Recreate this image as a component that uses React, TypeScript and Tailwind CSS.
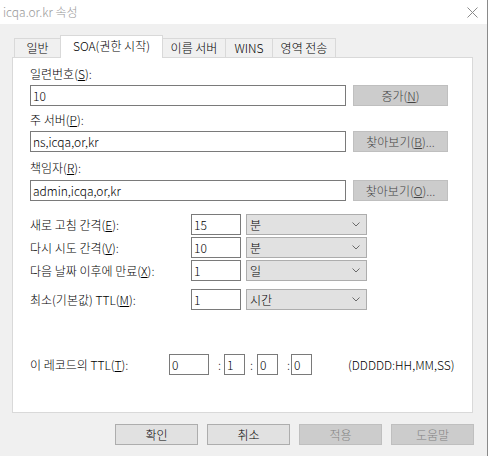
import { ReactNode } from "react";

const font = "font-['Noto_Sans_CJK_KR','Noto_Sans',sans-serif]";

function TextBox({ value, className }: { value: string; className: string }) {
  return (
    <div
      className={`h-[21px] border border-[#7a7a7a] bg-white pl-[2px] leading-[19px] text-black ${className}`}
    >
      {value}
    </div>
  );
}

function GrayButton({ children, dim }: { children: ReactNode; dim?: boolean }) {
  return (
    <div
      className={`flex h-[21px] w-[95px] items-center justify-center border border-[#bfbfbf] bg-[#cccccc] ${
        dim ? "text-[#838383]" : "text-[#444]"
      }`}
    >
      {children}
    </div>
  );
}

function Select({ value }: { value: string }) {
  return (
    <div className="flex h-[21px] w-[121px] items-center justify-between border border-[#adadad] bg-[#e1e1e1] pl-[3px] pr-[5px]">
      <span>{value}</span>
      <svg width="8" height="5" viewBox="0 0 8 5" className="mr-[1px]">
        <path d="M0.5 0.5 L4 4 L7.5 0.5" fill="none" stroke="#6a6a6a" strokeWidth="1" />
      </svg>
    </div>
  );
}

function IntervalRow({
  label,
  num,
  unit,
  className,
}: {
  label: ReactNode;
  num: string;
  unit: string;
  className?: string;
}) {
  return (
    <div className={`flex items-center ${className ?? ""}`}>
      <div className="w-[161px]">{label}</div>
      <TextBox value={num} className="w-[50px]" />
      <div className="ml-[5px]">
        <Select value={unit} />
      </div>
    </div>
  );
}

function Tab({ children, w, first }: { children: ReactNode; w: string; first?: boolean }) {
  return (
    <div
      className={`flex h-[19px] items-center justify-center border-t border-r border-[#d9d9d9] bg-[#f0f0f0] ${
        first ? "border-l" : ""
      } ${w}`}
    >
      {children}
    </div>
  );
}

function DialogButton({ children, disabled }: { children: ReactNode; disabled?: boolean }) {
  return (
    <div
      className={`flex h-[21px] w-[83px] items-center justify-center border ${
        disabled
          ? "border-[#bfbfbf] bg-[#cccccc] text-[#838383]"
          : "border-[#adadad] bg-[#e1e1e1] text-black"
      }`}
    >
      {children}
    </div>
  );
}

export default function App() {
  return (
    <div className={`flex h-[456px] w-[490px] bg-white text-[12px] font-light text-black ${font}`}>
      <div className="flex w-[488px] flex-col border-r border-[#8a8a8a]">
        {/* title bar */}
        <div className="flex h-[24px] items-center justify-between bg-white pl-[3px] pr-[9px]">
          <span className="text-[#999999]">icqa.or.kr 속성</span>
          <svg width="11" height="11" viewBox="0 0 11 11">
            <path d="M0.5 0.5 L10.5 10.5 M10.5 0.5 L0.5 10.5" stroke="#8a8a8a" strokeWidth="1" />
          </svg>
        </div>

        <div className="flex flex-1 flex-col bg-[#f0f0f0] pl-[12px] pt-[12px]">
          {/* tabs */}
          <div className="flex h-[21px] items-end pl-[2px]">
            <Tab w="w-[47px]" first>
              일반
            </Tab>
            <div className="relative z-10 -mb-px -ml-px flex h-[23px] w-[103px] items-start justify-center border border-b-0 border-[#d9d9d9] bg-white pt-[1px]">
              SOA(권한 시작)
            </div>
            <Tab w="w-[63px]">이름 서버</Tab>
            <Tab w="w-[47px]">WINS</Tab>
            <Tab w="w-[63px]">영역 전송</Tab>
          </div>

          {/* panel */}
          <div className="flex h-[356px] w-[461px] flex-col border border-[#d9d9d9] bg-white pl-[17px]">
            <div className="mt-[7px] leading-[18px]">
              일련번호(<u>S</u>):
            </div>
            <div className="mt-[2px] flex items-center gap-[7px]">
              <TextBox value="10" className="w-[316px]" />
              <GrayButton>
                증가(<u>N</u>)
              </GrayButton>
            </div>

            <div className="mt-[5px] leading-[18px]">
              주 서버(<u>P</u>):
            </div>
            <div className="mt-[2px] flex items-center gap-[7px]">
              <TextBox value="ns,icqa,or,kr" className="w-[316px]" />
              <GrayButton>
                찾아보기(<u>B</u>)...
              </GrayButton>
            </div>

            <div className="mt-[7px] leading-[18px]">
              책임자(<u>R</u>):
            </div>
            <div className="mt-[3px] flex items-center gap-[7px]">
              <TextBox value="admin,icqa,or,kr" className="w-[316px]" />
              <GrayButton>
                찾아보기(<u>O</u>)...
              </GrayButton>
            </div>

            <IntervalRow
              className="mt-[13px]"
              label={
                <>
                  새로 고침 간격(<u>E</u>):
                </>
              }
              num="15"
              unit="분"
            />
            <IntervalRow
              className="mt-[2px]"
              label={
                <>
                  다시 시도 간격(<u>V</u>):
                </>
              }
              num="10"
              unit="분"
            />
            <IntervalRow
              className="mt-[2px]"
              label={
                <>
                  다음 날짜 이후에 만료(<u>X</u>):
                </>
              }
              num="1"
              unit="일"
            />
            <IntervalRow
              className="mt-[8px]"
              label={
                <>
                  최소(기본값) TTL(<u>M</u>):
                </>
              }
              num="1"
              unit="시간"
            />

            <div className="mt-[44px] flex items-center">
              <div className="w-[139px]">
                이 레코드의 TTL(<u>T</u>):
              </div>
              <TextBox value="0" className="w-[40px]" />
              <span className="w-[15px] pr-[3px] text-right">:</span>
              <TextBox value="1" className="w-[21px]" />
              <span className="w-[12px] pr-[4px] text-right">:</span>
              <TextBox value="0" className="w-[21px]" />
              <span className="w-[13px] pr-[1px] text-right">:</span>
              <TextBox value="0" className="w-[21px]" />
              <span className="ml-[36px]">(DDDDD:HH,MM,SS)</span>
            </div>
          </div>

          {/* dialog buttons */}
          <div className="mt-[11px] flex gap-[9px] pl-[103px]">
            <DialogButton>확인</DialogButton>
            <DialogButton>취소</DialogButton>
            <DialogButton disabled>적용</DialogButton>
            <DialogButton disabled>도움말</DialogButton>
          </div>
        </div>
      </div>
    </div>
  );
}
